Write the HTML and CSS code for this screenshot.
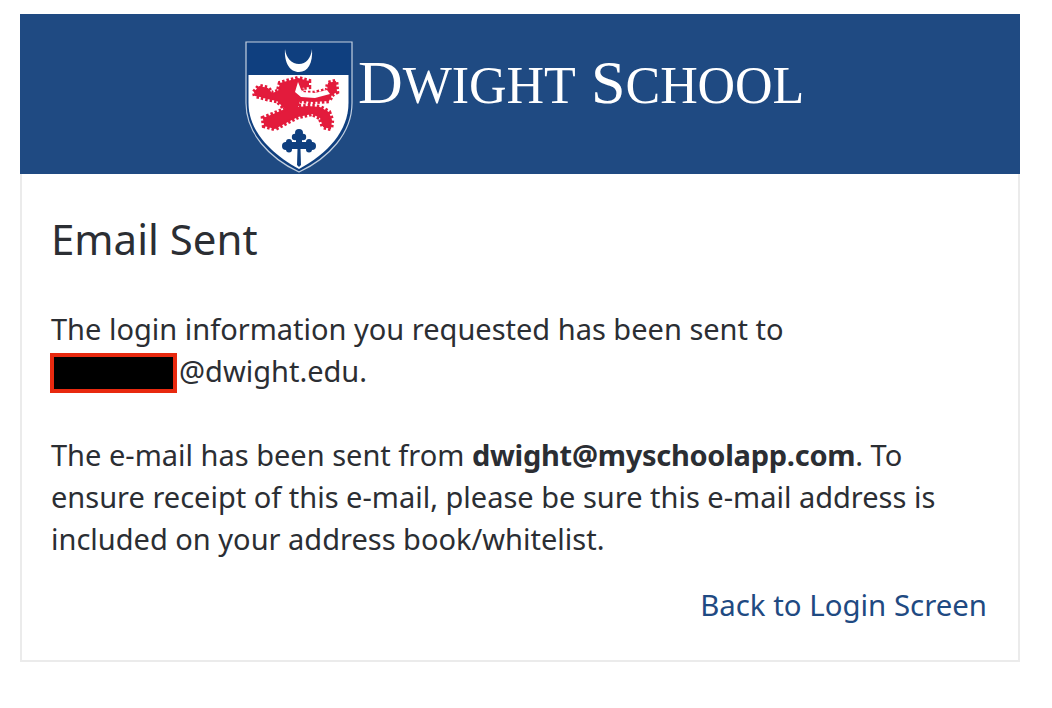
FILE: index.html
```html
<!DOCTYPE html>
<html lang="en">
<head>
<meta charset="utf-8">
<title>Email Sent</title>
<link rel="stylesheet" href="styles.css">
</head>
<body>
<main class="card">
  <header class="banner">
    <svg class="crest" width="108" height="132" viewBox="0 0 108 132" aria-hidden="true">
      <path d="M1 1H107V62C107 92 84 117 54 131C24 117 1 92 1 62Z" fill="#0f3f7f" stroke="#c3d0e0" stroke-width="1.2"/>
      <path d="M3.500 34H103.500V62C103.500 90 82 113 54 128C26 113 3.500 90 3.500 62Z" fill="#fff"/>
      <path d="M40 8C39 22 45 31 54 31C63 31 68 22 67 8C66 17 61 23 54 23C47 23 41 17 40 8Z" fill="#fff"/>
      <path fill="#e31b3c" stroke="#e31b3c" stroke-width="4.500" stroke-dasharray="2.500 2" d="M9 51L14 45L23 47L27 52L33 50L35 42L42 40L50 38L53 37L64 40L64 46L57 47L55 52L69 52L82 49L83 42L91 40L92 51L87 54L84 60L68 61L55 60L53 66L63 65L75 66L84 71L87 79L86 88L78 86L75 77L67 73L53 76L43 81L30 88L19 85L18 77L28 73L40 68L32 60L22 58L15 56L10 55Z"/>
      <path fill="#fff" d="M53 41L57 51L70 52L82 49L85 53L70 57L56 56L50 51Z"/>
      <g fill="#0f3f7f">
        <path d="M52 124L52.500 108H40V101H51V92H57V101H68V108H55.500L56 124L54 126Z"/>
        <circle cx="54" cy="92" r="4"/><circle cx="50" cy="96" r="3.200"/><circle cx="58" cy="96" r="3.200"/>
        <circle cx="41" cy="105" r="4"/><circle cx="44" cy="101" r="3"/><circle cx="44" cy="108.500" r="3"/>
        <circle cx="67" cy="105" r="4"/><circle cx="64" cy="101" r="3"/><circle cx="64" cy="108.500" r="3"/>
      </g>
    </svg>
    <div class="wordmark">D<span>WIGHT</span> S<span>CHOOL</span></div>
  </header>
  <section class="content">
    <h1>Email Sent</h1>
    <p>The login information you requested has been sent to<br><span class="redact"></span>@dwight.edu.</p>
    <p>The e-mail has been sent from <strong>dwight@myschoolapp.com</strong>. To ensure receipt of this e-mail, please be sure this e-mail address is included on your address book/whitelist.</p>
    <div class="actions"><a href="#">Back to Login Screen</a></div>
  </section>
</main>
</body>
</html>
```
FILE: styles.css
```css
* { box-sizing: border-box; }
html, body { margin: 0; background: #fff; }
body { padding: 14px 32px 0 20px; font-family: "Noto Sans", sans-serif; color: #2b2e33; }
.card { width: 1000px; height: 648px; border: 2px solid #ebebeb; border-top: 0; }
.banner {
  margin: 0 -2px;
  height: 160px;
  background: #1f4a82;
  display: flex;
  align-items: flex-start;
  padding: 27px 0 0 225px;
}
.crest { flex: none; display: block; filter: blur(0.4px); }
.wordmark {
  margin: 6px 0 0 5px;
  font-family: "Liberation Serif", serif;
  font-size: 62px;
  line-height: 70px;
  color: #fff;
  white-space: nowrap;
  filter: blur(0.4px);
}
.wordmark span { font-size: 52px; letter-spacing: -0.1px; }
.content { padding: 38px 31px 0 29px; }
h1 { margin: 0; font-size: 42px; font-weight: 400; line-height: 54px; }
p { margin: 42px 0 0; font-size: 29px; line-height: 42px; }
.redact {
  display: inline-block;
  width: 127px;
  height: 40px;
  margin: 3px 2px -1px -1px;
  background: #000;
  border: 4px solid #e8290f;
  vertical-align: top;
}
strong { font-weight: 700; letter-spacing: -0.27px; }
.actions { margin-top: 25px; text-align: right; font-size: 29.4px; line-height: 40px; }
a { color: #1f4a82; text-decoration: none; }
```
